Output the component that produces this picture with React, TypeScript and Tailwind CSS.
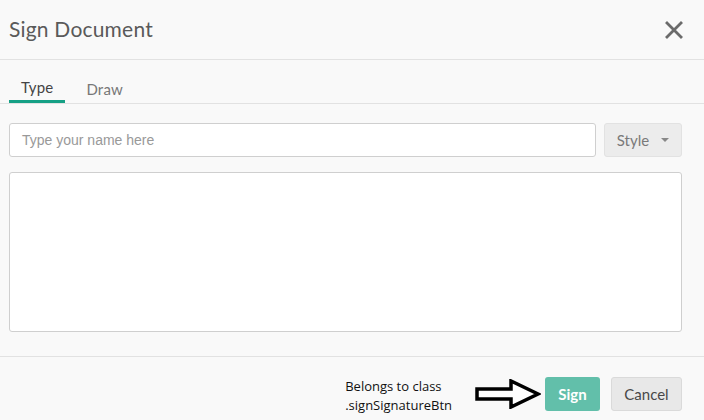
import React from "react";

/*
 * Sign Document dialog with the "Type" tab open and a callout arrow
 * pointing at the Sign button.
 */

function CloseIcon() {
	return (
		<svg width="18" height="18" viewBox="0 0 18 18" aria-hidden="true">
			<path
				d="M2 2 L16 16 M16 2 L2 16"
				stroke="#6b6b6b"
				strokeWidth="2.8"
				strokeLinecap="square"
			/>
		</svg>
	);
}

function CalloutArrow() {
	return (
		<svg width="66" height="30" viewBox="0 0 66 30" aria-hidden="true">
			<polygon
				points="2,10 36,10 36,2 63,15 36,28 36,20 2,20"
				fill="#ffffff"
				stroke="#000000"
				strokeWidth="3.5"
				strokeLinejoin="miter"
			/>
		</svg>
	);
}

export default function App() {
	return (
		<div
			className="w-[704px] h-[420px] bg-[#f9f9f9] flex flex-col overflow-hidden"
			style={{ fontFamily: "Lato, 'Open Sans', sans-serif" }}
		>
			{/* header */}
			<div className="h-[60px] shrink-0 border-b border-[#e2e2e2] pl-[9px] pr-[21px] flex items-center justify-between">
				<h1 className="text-[21px] text-[#5a5a5a] font-normal tracking-[0.2px] -mt-px">
					Sign Document
				</h1>
				<CloseIcon />
			</div>

			{/* tabs */}
			<div className="mt-[15px] border-b border-[#e2e2e2] px-[9px] flex">
				<div className="h-[28px] px-3 flex items-center border-b-[3px] border-[#16a085] -mb-px text-[15px] text-[#444] tracking-[0.2px]">
					Type
				</div>
				<div className="ml-[9px] h-[28px] px-3 flex items-center text-[15px] text-[#777] tracking-[0.2px]">
					Draw
				</div>
			</div>

			{/* body */}
			<div className="pl-[9px] pr-[22px] pt-[19px] flex flex-col">
				<div className="flex gap-2 h-[34px]">
					<div
						className="flex-1 bg-white border border-[#cfcfcf] rounded-[3px] flex items-center px-3 text-[14px] text-[#999]"
						style={{ fontFamily: "'Liberation Sans', Arial, sans-serif" }}
					>
						Type your name here
					</div>
					<div className="w-[78px] bg-[#ececec] border border-[#e2e2e2] rounded-[3px] flex items-center justify-center gap-3 text-[15px] text-[#7a7a7a]">
						<span>Style</span>
						<span className="w-0 h-0 border-l-[4px] border-r-[4px] border-t-[4px] border-l-transparent border-r-transparent border-t-[#888]" />
					</div>
				</div>
				<div className="mt-[15px] h-[160px] bg-white border border-[#cfcfcf] rounded-[3px]" />
			</div>

			{/* footer */}
			<div className="mt-[24px] border-t border-[#e2e2e2] pr-[22px] pt-[16px] flex items-center justify-end">
				<div
					className="leading-[19px] text-[#111] mr-[23px] mt-[4px]"
					style={{ fontFamily: "'Open Sans', 'Liberation Sans', sans-serif", fontSize: "13px" }}
				>
					<div>Belongs to class</div>
					<div>.signSignatureBtn</div>
				</div>
				<div className="mr-[4px] flex items-center">
					<CalloutArrow />
				</div>
				<button
					type="button"
					className="h-[34px] w-[55px] rounded-[3px] bg-[#62bfaa] text-white font-bold text-[15px]"
				>
					Sign
				</button>
				<button
					type="button"
					className="ml-[11px] h-[34px] w-[71px] rounded-[3px] bg-[#e8e8e8] border border-[#dadada] text-[#484848] text-[15px]"
				>
					Cancel
				</button>
			</div>
		</div>
	);
}
